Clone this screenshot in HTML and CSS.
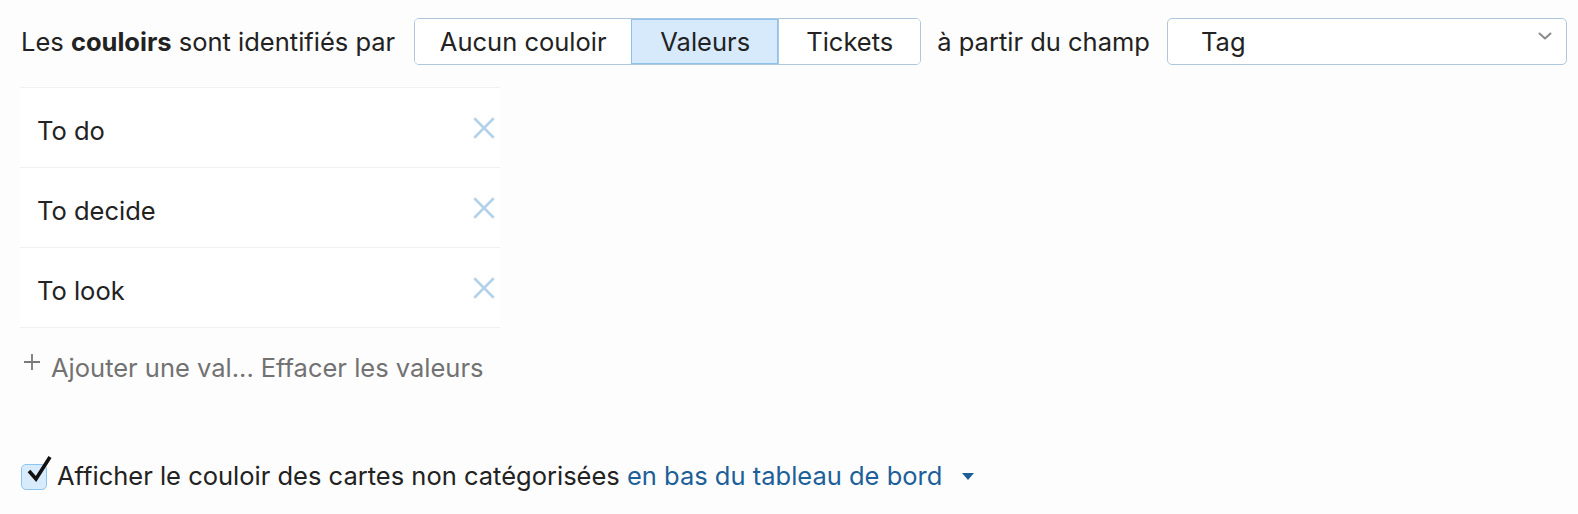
FILE: index.html
```html
<!DOCTYPE html>
<html lang="fr">
<head>
<meta charset="utf-8">
<link rel="stylesheet" href="styles.css">
</head>
<body>
<div class="page">
  <div class="top-row">
    <span class="label">Les <b>couloirs</b> sont identifiés par</span>
    <div class="segmented">
      <button class="seg">Aucun couloir</button>
      <button class="seg active">Valeurs</button>
      <button class="seg">Tickets</button>
    </div>
    <span class="label">à partir du champ</span>
    <div class="select">
      <span class="select-value">Tag</span>
      <svg class="chevron" width="14" height="8" viewBox="0 0 14 8"><path d="M1.5 1.5 L7 6.5 L12.5 1.5" fill="none" stroke="#8a8a8a" stroke-width="2" stroke-linecap="round" stroke-linejoin="round"/></svg>
    </div>
  </div>

  <ul class="values">
    <li class="value-row"><span class="value-text">To do</span><svg class="remove" width="22" height="22" viewBox="0 0 22 22"><path d="M2 2 L20 20 M20 2 L2 20" stroke="#b3d2ea" stroke-width="2.6" stroke-linecap="round"/></svg></li>
    <li class="value-row"><span class="value-text">To decide</span><svg class="remove" width="22" height="22" viewBox="0 0 22 22"><path d="M2 2 L20 20 M20 2 L2 20" stroke="#b3d2ea" stroke-width="2.6" stroke-linecap="round"/></svg></li>
    <li class="value-row"><span class="value-text">To look</span><svg class="remove" width="22" height="22" viewBox="0 0 22 22"><path d="M2 2 L20 20 M20 2 L2 20" stroke="#b3d2ea" stroke-width="2.6" stroke-linecap="round"/></svg></li>
  </ul>

  <div class="add-row">
    <svg class="plus" width="18" height="18" viewBox="0 0 18 18"><path d="M9 1 V17 M1 9 H17" stroke="#7a7a7a" stroke-width="1.8"/></svg>
    <span class="add-text">Ajouter une val...</span>
    <span class="add-text">Effacer les valeurs</span>
  </div>

  <div class="check-row">
    <span class="checkbox">
      <svg class="check" width="26" height="28" viewBox="0 0 26 28"><path d="M3 16 L10 24 L24 2" fill="none" stroke="#111" stroke-width="3.6" stroke-linejoin="miter" stroke-linecap="butt"/></svg>
    </span>
    <span class="check-label">Afficher le couloir des cartes non catégorisées <span class="link">en bas du tableau de bord</span></span>
    <svg class="caret" width="12" height="7" viewBox="0 0 12 7"><path d="M0 0 H12 L6 7 Z" fill="#1d5f99"/></svg>
  </div>
</div>
</body>
</html>
```
FILE: styles.css
```css
* { box-sizing: border-box; }
html, body { margin: 0; padding: 0; background: #fdfdfd; }
body {
  font-family: Inter, "Noto Sans", sans-serif;
  font-size: 25.5px;
  color: #222;
}
.page { padding: 18px 11px 0 21px; }
.top-row {
  display: flex;
  align-items: center;
  height: 47px;
}
.label { white-space: nowrap; }
.label b { font-weight: 700; }
.top-row > .label:first-child { margin-right: 19px; }
.segmented {
  display: flex;
  height: 47px;
  border: 1.5px solid #aec7df;
  border-radius: 5px;
  background: #fff;
  overflow: hidden;
}
.seg {
  font: inherit;
  color: #222;
  background: #fff;
  border: none;
  border-left: 1.5px solid #aec7df;
  padding: 0;
  margin: 0;
  height: 100%;
  white-space: nowrap;
}
.seg:first-child { border-left: none; width: 216px; }
.seg.active {
  background: #d7eafc;
  outline: 1.5px solid #8cc3ef;
  outline-offset: -1.5px;
  width: 147px;
}
.seg:last-child { width: 142px; }
.segmented + .label { margin-left: 16px; margin-right: 17px; }
.select {
  flex: 0 0 400px;
  height: 47px;
  border: 1.5px solid #aec7df;
  border-radius: 5px;
  background: #fff;
  display: flex;
  align-items: center;
  justify-content: space-between;
  padding: 0 14px 0 33px;
}
.chevron { align-self: flex-start; margin-top: 13px; }
.values {
  list-style: none;
  margin: 22px 0 0 -1px;
  padding: 0;
  width: 480px;
  border-top: 1px solid #f1f1f1;
}
.value-row {
  height: 80px;
  border-bottom: 1px solid #f1f1f1;
  background: #fff;
  display: flex;
  align-items: center;
  justify-content: space-between;
  padding: 0 5px 0 17px;
}
.value-text { padding-top: 5px; }
.add-row {
  display: flex;
  align-items: center;
  gap: 9px;
  height: 78px;
  padding-left: 2px;
  color: #727272;
}
.plus { margin-top: -10px; margin-right: 1px; }
.add-text { white-space: nowrap; }
.add-text + .add-text { margin-left: -2px; }
.check-row {
  display: flex;
  align-items: center;
  margin-top: 44px;
  height: 50px;
}
.checkbox {
  position: relative;
  width: 26px;
  height: 26px;
  border: 1.5px solid #8ec5f0;
  border-radius: 5px;
  background: #d8ebfc;
  margin-top: 4px;
  margin-right: 10px;
  flex: none;
}
.check { position: absolute; left: 4px; top: -10px; }
.check-label { white-space: nowrap; }
.link { color: #1d5f99; }
.caret { margin-left: 20px; margin-top: 2px; }
```
